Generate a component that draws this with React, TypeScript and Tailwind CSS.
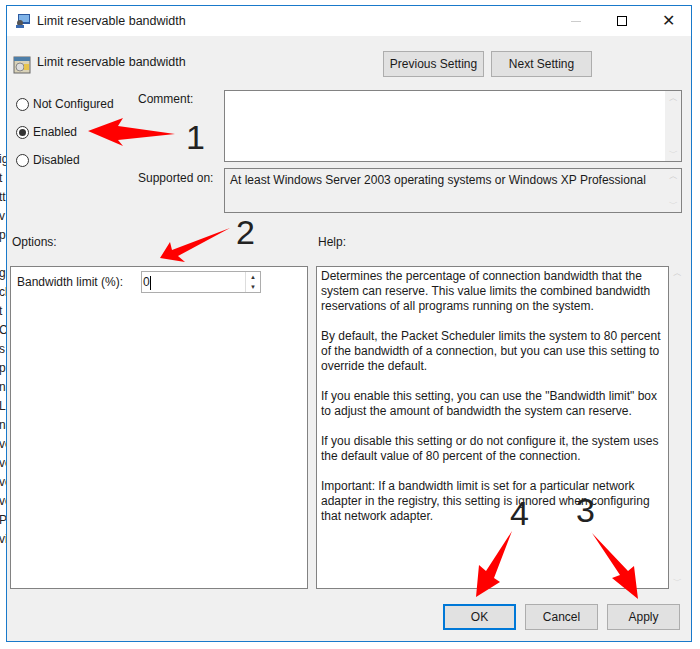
import React from "react";

const Radio = ({ label, checked }: { label: string; checked?: boolean }) => (
  <div className="flex items-center gap-[4px] h-[28px]">
    <span className="w-[13px] h-[13px] rounded-full border border-[#333] bg-white flex items-center justify-center">
      {checked && <span className="w-[7px] h-[7px] rounded-full bg-[#333]" />}
    </span>
    <span>{label}</span>
  </div>
);

const ScrollArrows = () => (
  <div className="w-[16px] flex flex-col justify-between items-center py-[3px] text-[#c8c8c8] text-[9px] leading-none bg-[#f0f0f0]">
    <span>︿</span>
    <span>﹀</span>
  </div>
);

const Btn = ({ label, focus }: { label: string; focus?: boolean }) => (
  <div
    className={`w-[73px] h-[26px] flex items-center justify-center bg-[#e1e1e1] border ${
      focus ? "border-[#0078d7] border-2" : "border-[#adadad]"
    }`}
  >
    {label}
  </div>
);

export default function App() {
  return (
    <div
      className="relative w-[700px] h-[649px] bg-white overflow-hidden text-[12px] text-[#1a1a1a]"
      style={{ fontFamily: '"Liberation Sans", "Noto Sans", sans-serif' }}
    >
      <div className="absolute left-0 top-[150px] flex flex-col text-[12px] leading-[19px] text-[#222]">
        {["ig","t","tt","v","p,","","g","cl","t","C","s","p","na","L","na","vo","vo","vo","vo","P","vi"].map((t, i) => (
          <span key={i} className="h-[19px] -ml-[1px]">{t}</span>
        ))}
      </div>
      <div className="absolute left-[6px] top-[5px] w-[686px] h-[637px] border border-[#1979ca] bg-[#f0f0f0] flex flex-col">
        <div className="h-[30px] bg-white flex items-center pl-[8px] shrink-0">
          <svg width="16" height="16" viewBox="0 0 16 16">
            <rect x="3" y="1" width="12" height="10" fill="#2c5aa0" />
            <rect x="4" y="2" width="10" height="7" fill="#7fb3e8" />
            <circle cx="5" cy="10" r="3" fill="#555" />
            <rect x="1" y="12" width="8" height="3" fill="#3a6ab0" />
          </svg>
          <span className="ml-[6px] text-[12.5px]">Limit reservable bandwidth</span>
          <div className="ml-auto flex items-center h-full">
            <div className="w-[46px] flex justify-center"><div className="w-[10px] h-px bg-[#ccc]" /></div>
            <div className="w-[46px] flex justify-center"><div className="w-[10px] h-[10px] border border-black" /></div>
            <div className="w-[46px] flex justify-center text-[16px] font-light">✕</div>
          </div>
        </div>
        <div className="flex items-start pl-[6px] pr-[99px] mt-[15px]">
          <svg width="18" height="18" viewBox="0 0 18 18" className="mt-[5px]">
            <rect x="1" y="1" width="16" height="16" fill="#d9d2b8" stroke="#666" />
            <rect x="1" y="1" width="16" height="4" fill="#4d7ea8" />
            <circle cx="7" cy="11" r="4" fill="#ddd" stroke="#888" />
            <rect x="11" y="8" width="5" height="6" fill="#e6c44d" />
          </svg>
          <span className="ml-[6px] text-[12.5px] mt-[2px]">Limit reservable bandwidth</span>
          <div className="ml-auto flex gap-[7px]">
            <div className="w-[101px] h-[26px] flex items-center justify-center bg-[#e1e1e1] border border-[#adadad]">Previous Setting</div>
            <div className="w-[101px] h-[26px] flex items-center justify-center bg-[#e1e1e1] border border-[#adadad]">Next Setting</div>
          </div>
        </div>
        <div className="flex pl-[9px] mt-[13px]">
          <div className="w-[122px] flex flex-col">
            <Radio label="Not Configured" />
            <Radio label="Enabled" checked />
            <Radio label="Disabled" />
          </div>
          <div className="flex flex-col">
            <div className="flex">
              <span className="w-[86px]">Comment:</span>
              <div className="w-[458px] h-[72px] border border-[#828282] bg-white flex justify-end">
                <ScrollArrows />
              </div>
            </div>
            <div className="flex mt-[6px]">
              <span className="w-[86px] pt-[1px]">Supported on:</span>
              <div className="w-[458px] h-[45px] border border-[#828282] bg-[#f0f0f0] flex">
                <span className="flex-1 pl-[5px] pt-[2px]">At least Windows Server 2003 operating systems or Windows XP Professional</span>
                <ScrollArrows />
              </div>
            </div>
          </div>
        </div>
        <div className="flex mt-[20px] pl-[5px]">
          <span className="w-[306px]">Options:</span>
          <span>Help:</span>
        </div>
        <div className="flex mt-[15px] pl-[3px]">
          <div className="w-[298px] h-[323px] border border-[#828282] bg-white flex items-start pt-[4px] pl-[6px]">
            <span className="w-[124px] pt-[2px]">Bandwidth limit (%):</span>
            <div className="w-[120px] h-[22px] border border-[#adadad] flex">
              <span className="flex-1 pl-[1px] leading-[20px]">0<span className="inline-block w-px h-[14px] bg-black align-middle" /></span>
              <div className="w-[15px] flex flex-col border-l border-[#ddd] text-[6px] leading-[10px] items-center text-[#333]">
                <span>▲</span><span>▼</span>
              </div>
            </div>
          </div>
          <div className="ml-[8px] flex">
            <div className="w-[353px] h-[323px] border border-[#828282] bg-white px-[4px] pt-[2px] leading-[15px] text-[12px]">
              <p>Determines the percentage of connection bandwidth that the system can reserve. This value limits the combined bandwidth reservations of all programs running on the system.</p>
              <p className="mt-[15px]">By default, the Packet Scheduler limits the system to 80 percent of the bandwidth of a connection, but you can use this setting to override the default.</p>
              <p className="mt-[15px]">If you enable this setting, you can use the "Bandwidth limit" box to adjust the amount of bandwidth the system can reserve.</p>
              <p className="mt-[15px]">If you disable this setting or do not configure it, the system uses the default value of 80 percent of the connection.</p>
              <p className="mt-[15px]">Important: If a bandwidth limit is set for a particular network adapter in the registry, this setting is ignored when configuring that network adapter.</p>
            </div>
            <ScrollArrows />
          </div>
        </div>
        <div className="flex justify-end gap-[9px] pr-[11px] mt-[15px]">
          <Btn label="OK" focus />
          <Btn label="Cancel" />
          <Btn label="Apply" />
        </div>
      </div>
      <svg className="absolute inset-0 pointer-events-none" width="700" height="649">
        <polygon points="88,131 123,118 118,126 175,134 118,140 123,146" fill="#f00" />
        <polygon points="160,258 170,242 172,250 230,228 178,256 185,262" fill="#f00" />
        <polygon points="476,597 479,565 486,571 512,531 494,578 500,582" fill="#f00" />
        <polygon points="638,599 612,578 620,575 592,533 628,571 634,566" fill="#f00" />
        <g fontFamily="Liberation Sans, sans-serif" fontSize="34" fill="#222">
          <text x="186" y="149">1</text>
          <text x="236" y="244">2</text>
          <text x="576" y="522">3</text>
          <text x="510" y="525">4</text>
        </g>
      </svg>
    </div>
  );
}
